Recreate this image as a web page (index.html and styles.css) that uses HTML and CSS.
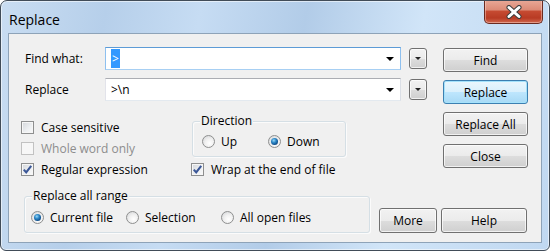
FILE: index.html
```html
<!DOCTYPE html>
<html>
<head>
<meta charset="utf-8">
<link rel="stylesheet" href="styles.css">
</head>
<body>
<div class="window">
  <div class="titlebar">
    <span class="title">Replace</span>
    <div class="close">
      <svg width="18" height="14" viewBox="0 0 18 14">
        <path d="M4 2.5 L14 11.5 M14 2.5 L4 11.5" stroke="#3c3c3c" stroke-width="5" stroke-linecap="round"/>
        <path d="M4 2.5 L14 11.5 M14 2.5 L4 11.5" stroke="#ffffff" stroke-width="3" stroke-linecap="round"/>
      </svg>
    </div>
  </div>
  <div class="client">
    <div class="top">
      <div class="left">
        <div class="row">
          <span class="lbl">Find what:</span>
          <div class="combo focus"><span class="sel">&gt;</span><span class="arrow"></span></div>
          <span class="dd"><span class="tri"></span></span>
        </div>
        <div class="row row2">
          <span class="lbl">Replace</span>
          <div class="combo"><span class="val">&gt;\n</span><span class="arrow"></span></div>
          <span class="dd"><span class="tri"></span></span>
        </div>
        <div class="opts">
          <div class="checks">
            <div class="chk"><span class="box"></span><span>Case sensitive</span></div>
            <div class="chk disabled"><span class="box"></span><span>Whole word only</span></div>
            <div class="chk"><span class="box"><svg width="11" height="11" viewBox="0 0 11 11"><polyline points="1.8,5.6 4.2,8.4 9.2,1.8" fill="none" stroke="#3b5797" stroke-width="2.1"/></svg></span><span>Regular expression</span></div>
          </div>
          <div class="dircol">
            <div class="group dir">
              <span class="legend">Direction</span>
              <div class="ritem"><span class="radio"></span><span>Up</span></div>
              <div class="ritem"><span class="radio on"></span><span>Down</span></div>
            </div>
            <div class="chk wrap"><span class="box"><svg width="11" height="11" viewBox="0 0 11 11"><polyline points="1.8,5.6 4.2,8.4 9.2,1.8" fill="none" stroke="#3b5797" stroke-width="2.1"/></svg></span><span>Wrap at the end of file</span></div>
          </div>
        </div>
      </div>
      <div class="side">
        <div class="btn">Find</div>
        <div class="btn default">Replace</div>
        <div class="btn">Replace All</div>
        <div class="btn">Close</div>
      </div>
    </div>
    <div class="bottom">
      <div class="group range">
        <span class="legend">Replace all range</span>
        <div class="ritem wide"><span class="radio on"></span><span>Current file</span></div>
        <div class="ritem wide"><span class="radio"></span><span>Selection</span></div>
        <div class="ritem wide"><span class="radio"></span><span>All open files</span></div>
      </div>
      <div class="btn more">More</div>
      <div class="btn help">Help</div>
    </div>
  </div>
</div>
</body>
</html>
```

FILE: styles.css
```css
html, body {
  margin: 0;
  padding: 0;
  background: #ffffff;
}

body {
  font-family: "Open Sans", "Noto Sans", "DejaVu Sans", sans-serif;
  font-size: 12px;
  color: #000;
}

.window {
  width: 550px;
  height: 251px;
  box-sizing: border-box;
  border: 1px solid #414c58;
  border-radius: 7px 7px 6px 6px;
  background: linear-gradient(100deg, #c9ddf2 0%, #b6cfea 18%, #c6dcf3 34%, #b2cce8 52%, #d1e5f8 72%, #c0d8f1 100%);
  box-shadow: inset 0 0 0 1px rgba(255, 255, 255, 0.55);
  display: flex;
  flex-direction: column;
  overflow: hidden;
}

.titlebar {
  height: 32px;
  display: flex;
  align-items: flex-start;
}

.title {
  margin: 10px 0 0 8px;
  font-size: 14px;
  line-height: 17px;
}

.close {
  margin-left: auto;
  margin-right: 6px;
  margin-top: -1px;
  width: 59px;
  height: 24px;
  box-sizing: border-box;
  border: 1px solid #6a2a20;
  border-top: none;
  border-radius: 0 0 5px 5px;
  background: linear-gradient(#e9a998 0%, #dc8b77 42%, #c54a31 50%, #b83b24 78%, #d0684f 100%);
  box-shadow: inset 0 0 0 1px rgba(255, 220, 210, 0.45);
  display: flex;
  align-items: center;
  justify-content: center;
}

.client {
  margin: 0 7px;
  height: 210px;
  box-sizing: border-box;
  border: 1px solid #8ea3b8;
  background: #f0f0f0;
  display: flex;
  flex-direction: column;
}

.top {
  display: flex;
}

.left {
  padding-top: 13px;
}

.row {
  display: flex;
  align-items: center;
  height: 23px;
}

.row2 {
  margin-top: 8px;
}

.lbl {
  margin-left: 16px;
  width: 80px;
}

.combo {
  width: 296px;
  height: 23px;
  box-sizing: border-box;
  border: 1px solid;
  border-color: #abadb3 #dbdfe6 #e3e9ef #e2e3ea;
  background: #fff;
  display: flex;
  align-items: center;
  padding-left: 5px;
}

.combo.focus {
  border-color: #5d9bd6 #8ec0ef #a7cff3 #8ec0ef;
}

.sel {
  background: #3399ff;
  color: #fff;
  line-height: 19px;
  padding: 0 1px;
}

.arrow {
  margin-left: auto;
  margin-right: 6px;
  width: 0;
  height: 0;
  border-left: 4px solid transparent;
  border-right: 4px solid transparent;
  border-top: 4px solid #000;
}

.dd {
  margin-left: 8px;
  width: 18px;
  height: 21px;
  box-sizing: border-box;
  border: 1px solid #707070;
  border-radius: 3px;
  background: linear-gradient(#f2f2f2 0%, #ebebeb 50%, #dddddd 51%, #cfcfcf 100%);
  box-shadow: inset 0 0 0 1px rgba(255, 255, 255, 0.7);
  display: flex;
  align-items: center;
  justify-content: center;
}

.tri {
  width: 0;
  height: 0;
  border-left: 3px solid transparent;
  border-right: 3px solid transparent;
  border-top: 3px solid #222;
}

.opts {
  display: flex;
  margin-top: 16px;
}

.checks {
  margin-left: 12px;
  width: 171px;
  display: flex;
  flex-direction: column;
}

.chk {
  display: flex;
  align-items: center;
  gap: 7px;
  height: 21px;
}

.box {
  width: 13px;
  height: 13px;
  box-sizing: border-box;
  border: 1px solid #8e8f8f;
  background: linear-gradient(135deg, #d3d6da 0%, #eef0f2 60%, #fafafa 100%);
  box-shadow: inset 0 0 0 1px #f6f6f6;
  display: flex;
  align-items: center;
  justify-content: center;
}

.box svg {
  display: block;
}

.chk.disabled {
  color: #8d8d8d;
}

.chk.disabled .box {
  border-color: #c2c2c2;
  background: #f7f7f7;
  box-shadow: none;
}

.dircol {
  display: flex;
  flex-direction: column;
  align-items: flex-start;
}

.group {
  position: relative;
  box-sizing: border-box;
  border: 1px solid #d5dfe5;
  border-radius: 3px;
  box-shadow: inset 1px 1px 0 #fbfbfb, 1px 1px 0 #fbfbfb;
  display: flex;
}

.group.dir {
  margin-top: 4px;
  width: 154px;
  height: 36px;
  padding: 13px 0 0 9px;
}

.legend {
  position: absolute;
  top: -9px;
  left: 7px;
  padding: 0 1px;
  background: #f0f0f0;
  line-height: 16px;
}

.wrap {
  margin-top: 2px;
  margin-left: -1px;
}

.ritem {
  display: flex;
  align-items: center;
  gap: 6px;
  width: 66px;
  height: 13px;
}

.ritem.wide {
  width: 95px;
}

.radio {
  flex: none;
  width: 13px;
  height: 13px;
  box-sizing: border-box;
  border-radius: 50%;
  border: 1px solid #8e8f8f;
  background: radial-gradient(circle at 60% 65%, #ffffff 0%, #f0f0f0 45%, #cfd1d3 100%);
  display: flex;
  align-items: center;
  justify-content: center;
}

.radio.on::after {
  content: "";
  width: 7px;
  height: 7px;
  border-radius: 50%;
  background: radial-gradient(circle at 40% 35%, #9ad8f6 0%, #2f8ac9 35%, #0f4f8c 70%, #0a3566 100%);
}

.side {
  margin-left: auto;
  margin-right: 13px;
  padding-top: 14px;
  width: 85px;
  display: flex;
  flex-direction: column;
  gap: 8px;
}

.btn {
  height: 24px;
  box-sizing: border-box;
  border: 1px solid #707070;
  border-radius: 3px;
  background: linear-gradient(#f2f2f2 0%, #ebebeb 50%, #dddddd 51%, #cfcfcf 100%);
  box-shadow: inset 0 0 0 1px rgba(255, 255, 255, 0.7);
  display: flex;
  align-items: center;
  justify-content: center;
}

.btn.default {
  border-color: #3c7fb1;
  background: linear-gradient(#eaf6fd 0%, #d9f0fc 50%, #bee6fd 51%, #a7d9f5 100%);
  box-shadow: inset 0 0 0 1px #a5e2fb;
}

.bottom {
  margin-top: auto;
  display: flex;
  align-items: flex-end;
  padding: 0 13px 9px 15px;
}

.group.range {
  width: 346px;
  height: 37px;
  padding: 14px 0 0 6px;
}

.btn.more {
  margin-left: 9px;
  width: 58px;
  height: 25px;
}

.btn.help {
  margin-left: 4px;
  width: 86px;
  height: 25px;
}
```
